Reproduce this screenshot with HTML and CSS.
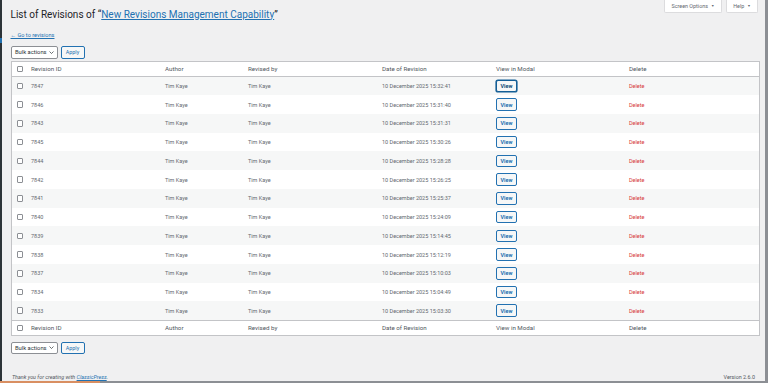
FILE: index.html
```html
<!DOCTYPE html>
<html lang="en">
<head>
<meta charset="utf-8">
<title>List of Revisions</title>
<link rel="stylesheet" href="styles.css">
</head>
<body>
<div class="frame">
  <div class="menu-edge"><span class="menu-current"></span></div>
  <main class="wrap">
    <div class="top">
      <h1 class="title">List of Revisions of “<a href="#">New Revisions Management Capability</a>”</h1>
      <div class="meta-links">
        <span class="meta-tab meta-screen">Screen Options <span class="arrow">▼</span></span>
        <span class="meta-tab meta-help">Help <span class="arrow">▼</span></span>
      </div>
    </div>
    <div class="back-row"><a class="back" href="#">← Go to revisions</a></div>
    <div class="bulk">
      <span class="select">Bulk actions <svg class="chev" viewBox="0 0 10 6" width="5" height="3"><path d="M1 1l4 4 4-4" fill="none" stroke="#2c3338" stroke-width="1.4"/></svg></span>
      <span class="btn-apply">Apply</span>
    </div>
    <table class="revs">
      <colgroup>
        <col class="c-cb"><col class="c-id"><col class="c-author"><col class="c-rev"><col class="c-date"><col class="c-view"><col class="c-del">
      </colgroup>
      <thead>
        <tr><th class="cbcell"><span class="cb"></span></th><th>Revision ID</th><th>Author</th><th>Revised by</th><th>Date of Revision</th><th>View in Modal</th><th>Delete</th></tr>
      </thead>
      <tbody>
        <tr><td class="cbcell"><span class="cb"></span></td><td>7847</td><td>Tim Kaye</td><td>Tim Kaye</td><td>10 December 2025 15:32:41</td><td><span class="btn-view focus">View</span></td><td class="del">Delete</td></tr>
        <tr><td class="cbcell"><span class="cb"></span></td><td>7846</td><td>Tim Kaye</td><td>Tim Kaye</td><td>10 December 2025 15:31:40</td><td><span class="btn-view">View</span></td><td class="del">Delete</td></tr>
        <tr><td class="cbcell"><span class="cb"></span></td><td>7843</td><td>Tim Kaye</td><td>Tim Kaye</td><td>10 December 2025 15:31:31</td><td><span class="btn-view">View</span></td><td class="del">Delete</td></tr>
        <tr><td class="cbcell"><span class="cb"></span></td><td>7845</td><td>Tim Kaye</td><td>Tim Kaye</td><td>10 December 2025 15:30:26</td><td><span class="btn-view">View</span></td><td class="del">Delete</td></tr>
        <tr><td class="cbcell"><span class="cb"></span></td><td>7844</td><td>Tim Kaye</td><td>Tim Kaye</td><td>10 December 2025 15:28:28</td><td><span class="btn-view">View</span></td><td class="del">Delete</td></tr>
        <tr><td class="cbcell"><span class="cb"></span></td><td>7842</td><td>Tim Kaye</td><td>Tim Kaye</td><td>10 December 2025 15:26:25</td><td><span class="btn-view">View</span></td><td class="del">Delete</td></tr>
        <tr><td class="cbcell"><span class="cb"></span></td><td>7841</td><td>Tim Kaye</td><td>Tim Kaye</td><td>10 December 2025 15:25:37</td><td><span class="btn-view">View</span></td><td class="del">Delete</td></tr>
        <tr><td class="cbcell"><span class="cb"></span></td><td>7840</td><td>Tim Kaye</td><td>Tim Kaye</td><td>10 December 2025 15:24:09</td><td><span class="btn-view">View</span></td><td class="del">Delete</td></tr>
        <tr><td class="cbcell"><span class="cb"></span></td><td>7839</td><td>Tim Kaye</td><td>Tim Kaye</td><td>10 December 2025 15:14:45</td><td><span class="btn-view">View</span></td><td class="del">Delete</td></tr>
        <tr><td class="cbcell"><span class="cb"></span></td><td>7838</td><td>Tim Kaye</td><td>Tim Kaye</td><td>10 December 2025 15:12:19</td><td><span class="btn-view">View</span></td><td class="del">Delete</td></tr>
        <tr><td class="cbcell"><span class="cb"></span></td><td>7837</td><td>Tim Kaye</td><td>Tim Kaye</td><td>10 December 2025 15:10:03</td><td><span class="btn-view">View</span></td><td class="del">Delete</td></tr>
        <tr><td class="cbcell"><span class="cb"></span></td><td>7834</td><td>Tim Kaye</td><td>Tim Kaye</td><td>10 December 2025 15:04:49</td><td><span class="btn-view">View</span></td><td class="del">Delete</td></tr>
        <tr><td class="cbcell"><span class="cb"></span></td><td>7833</td><td>Tim Kaye</td><td>Tim Kaye</td><td>10 December 2025 15:03:30</td><td><span class="btn-view">View</span></td><td class="del">Delete</td></tr>
      </tbody>
      <tfoot>
        <tr><th class="cbcell"><span class="cb"></span></th><th>Revision ID</th><th>Author</th><th>Revised by</th><th>Date of Revision</th><th>View in Modal</th><th>Delete</th></tr>
      </tfoot>
    </table>
    <div class="bulk bulk-bottom">
      <span class="select">Bulk actions <svg class="chev" viewBox="0 0 10 6" width="5" height="3"><path d="M1 1l4 4 4-4" fill="none" stroke="#2c3338" stroke-width="1.4"/></svg></span>
      <span class="btn-apply">Apply</span>
    </div>
    <footer class="foot">
      <span class="thanks">Thank you for creating with <a href="#">ClassicPress</a>.</span>
      <span class="version">Version 2.6.0</span>
    </footer>
  </main>
  <div class="scrollbar"></div>
  <div class="bottom-bar"><span class="bottom-accent"></span></div>
</div>
</body>
</html>
```

FILE: styles.css
```css
* { box-sizing: border-box; }
html, body { margin: 0; padding: 0; height: 100%; overflow: hidden; }
body {
  font-family: Roboto, "Liberation Sans", sans-serif;
  background: #f0f0f1;
  color: #3c434a;
}
.frame {
  display: grid;
  grid-template-columns: 2px 1fr 3px;
  grid-template-rows: 381px 2px;
  width: 768px;
  height: 383px;
}
.menu-edge {
  background: #2c3338;
  display: flex;
  flex-direction: column;
  padding-top: 38px;
}
.menu-current { display: block; height: 5px; background: #2271b1; }
.scrollbar { background: #8c8f94; }
.bottom-bar { grid-column: 1 / -1; background: #8c8f94; display: flex; }
.bottom-accent { width: 100px; background: #d98f62; }

.wrap {
  display: flex;
  flex-direction: column;
  padding: 0 7px 0 8.5px;
  min-width: 0;
}
.top {
  display: flex;
  justify-content: space-between;
  align-items: flex-start;
  height: 22px;
}
.title {
  margin: 0;
  padding-top: 6.5px;
  font-size: 10px;
  line-height: 15px;
  font-weight: 400;
  color: #1d2327;
}
.title a { color: #2271b1; }
.meta-links { display: flex; gap: 4px; }
.meta-tab {
  display: flex;
  align-items: center;
  justify-content: center;
  height: 13px;
  background: #fff;
  border: 1px solid #dcdcde;
  border-top: 0;
  border-radius: 0 0 2px 2px;
  font-size: 5.4px;
  color: #646970;
}
.meta-screen { width: 58px; }
.meta-help { width: 32px; }
.arrow { font-size: 3.5px; margin-left: 3px; }

.back-row { margin-top: 6px; height: 8px; line-height: 8px; }
.back { font-size: 5.6px; color: #2271b1; }

.bulk {
  display: flex;
  gap: 3px;
  margin-top: 10px;
  height: 12.7px;
}
.bulk-bottom { margin-top: 5.5px; }
.select {
  display: flex;
  align-items: center;
  justify-content: space-between;
  width: 47px;
  padding: 0 3px 0 3.5px;
  background: #fff;
  border: 1px solid #8c8f94;
  border-radius: 2px;
  font-size: 5.8px;
  color: #2c3338;
}
.btn-apply {
  display: flex;
  align-items: center;
  justify-content: center;
  width: 24px;
  background: #f6f7f7;
  border: 1px solid #2271b1;
  border-radius: 2px;
  font-size: 5.4px;
  color: #2271b1;
}

.revs {
  margin-top: 2px;
  width: 748px;
  border: 1px solid #c3c4c7;
  border-collapse: collapse;
  table-layout: fixed;
  background: #fff;
}
.c-cb { width: 16px; }
.c-id { width: 134px; }
.c-author { width: 83px; }
.c-rev { width: 134px; }
.c-date { width: 114px; }
.c-view { width: 133px; }
.c-del { width: 134px; }
.revs th {
  height: 15.3px;
  padding: 0 4px;
  text-align: left;
  font-weight: 400;
  font-size: 6.2px;
  color: #50575e;
}
.revs thead th { border-bottom: 1px solid #c3c4c7; }
.revs tfoot th { border-top: 1px solid #c3c4c7; }
.revs td {
  height: 18.75px;
  padding: 0 4px;
  font-size: 5.5px;
  color: #646970;
}
.revs tbody tr:nth-child(odd) { background: #f6f7f7; }
.revs .cbcell { padding: 0 0 0 5px; }
.cb {
  display: block;
  width: 6.5px;
  height: 6.5px;
  background: #fff;
  border: 1px solid #8c8f94;
  border-radius: 1px;
}
.btn-view {
  display: inline-flex;
  align-items: center;
  justify-content: center;
  width: 21px;
  height: 12.3px;
  background: #f6f7f7;
  border: 1px solid #2271b1;
  border-radius: 2px;
  font-size: 5.4px;
  font-weight: 700;
  color: #2271b1;
  vertical-align: middle;
}
.btn-view.focus {
  color: #0a4b78;
  border-color: #135e96;
  box-shadow: 0 0 0 0.6px #135e96;
}
.del { color: #d63638 !important; }

.foot {
  margin-top: auto;
  display: flex;
  justify-content: space-between;
  align-items: center;
  height: 9px;
  padding: 0 3px 0 1.5px;
  font-size: 5.4px;
  color: #50575e;
}
.thanks { font-style: italic; }
.thanks a { color: #2271b1; }
.version { padding-right: 0; }
```
